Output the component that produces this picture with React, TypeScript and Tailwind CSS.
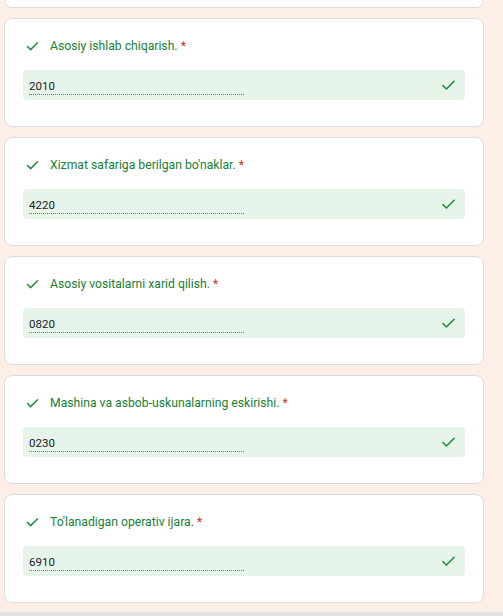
import { Check } from "lucide-react";

const items = [
  { label: "Asosiy ishlab chiqarish.", value: "2010" },
  { label: "Xizmat safariga berilgan bo'naklar.", value: "4220" },
  { label: "Asosiy vositalarni xarid qilish.", value: "0820" },
  { label: "Mashina va asbob-uskunalarning eskirishi.", value: "0230" },
  { label: "To'lanadigan operativ ijara.", value: "6910" },
];

function QuestionCard({ label, value }: { label: string; value: string }) {
  return (
    <div className="h-[109px] rounded-lg border border-[#dadce0] bg-white px-[18px] pt-[20px]">
      <div className="flex h-[14px] items-center gap-[10px] pl-[2px]">
        <Check className="h-[15px] w-[15px] text-[#1e8e3e]" strokeWidth={2.4} />
        <span className="text-[12.2px] text-[#188038]">
          {label} <span className="text-[#d93025]">*</span>
        </span>
      </div>
      <div className="mt-[17px] flex h-[30px] items-center justify-between rounded bg-[#e6f4ea] pl-[6px] pr-[8px]">
        <div className="w-[215px] border-b border-dotted border-[#70757a] pt-[3px] pb-[1px] text-[11.5px] leading-[14px] text-[#202124]">
          {value}
        </div>
        <Check className="h-[17px] w-[17px] text-[#1e8e3e]" strokeWidth={2.2} />
      </div>
    </div>
  );
}

export default function App() {
  return (
    <div
      className="h-[616px] w-[503px] overflow-hidden bg-[#fdeee8]"
      style={{ fontFamily: "Roboto, 'Liberation Sans', sans-serif" }}
    >
      <div className="ml-[4px] flex h-[612px] w-[480px] flex-col gap-[10px]">
        {/* tail of the previous question */}
        <div className="h-[8px] rounded-b-lg border border-t-0 border-[#dadce0] bg-white" />
        {items.map((it) => (
          <QuestionCard key={it.value} label={it.label} value={it.value} />
        ))}
      </div>
      <div className="h-[4px] w-full bg-[#e3e3e3]" />
    </div>
  );
}
